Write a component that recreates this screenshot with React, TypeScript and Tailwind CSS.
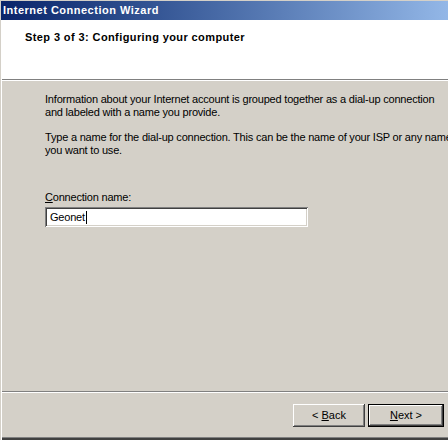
import type { ReactNode } from 'react'

const raised =
  'shadow-[inset_-1px_-1px_#404040,inset_1px_1px_#ffffff,inset_-2px_-2px_#808080,inset_2px_2px_#d4d0c8]'
const sunken =
  'shadow-[inset_1px_1px_#808080,inset_-1px_-1px_#ffffff,inset_2px_2px_#404040,inset_-2px_-2px_#d4d0c8]'

function WizButton({ children, isDefault }: { children: ReactNode; isDefault?: boolean }) {
  if (isDefault) {
    return (
      <div className="h-[23px] w-[76px] border border-black">
        <button className={`flex h-full w-full items-center justify-center bg-[#d4d0c8] text-[11px] text-black ${raised}`}>
          {children}
        </button>
      </div>
    )
  }
  return (
    <button className={`flex h-[23px] w-[72px] items-center justify-center bg-[#d4d0c8] text-[11px] text-black ${raised}`}>
      {children}
    </button>
  )
}

export default function App() {
  return (
    <div
      className="flex h-[440px] w-[448px] flex-col overflow-hidden bg-[#d4d0c8] pl-px pt-px text-black"
      style={{ fontFamily: '"Liberation Sans", Arial, sans-serif' }}
    >
      {/* caption */}
      <div className="flex h-[19px] shrink-0 items-center bg-gradient-to-r from-[#0a246a] to-[#93b7e7] pl-[2px]">
        <span className="text-[11px] font-bold leading-none tracking-[0.5px] text-white">Internet Connection Wizard</span>
      </div>

      <div className="flex flex-1 flex-col border-l border-white">
        {/* header */}
        <div className="h-[59px] shrink-0 bg-white pl-[23px] pt-[11px]">
          <p className="text-[11px] font-bold leading-[13px] tracking-[0.4px]">Step 3 of 3: Configuring your computer</p>
        </div>
        <div className="h-px shrink-0 bg-[#808080]" />
        <div className="h-px shrink-0 bg-white" />

        {/* body */}
        <div className="flex-1 pl-[43px] pt-[12px] text-[11px] leading-[13px] tracking-[-0.2px]">
          <p className="whitespace-nowrap">
            Information about your Internet account is grouped together as a dial-up connection
            <br />
            and labeled with a name you provide.
          </p>
          <p className="mt-[12px] whitespace-nowrap">
            Type a name for the dial-up connection. This can be the name of your ISP or any name
            <br />
            you want to use.
          </p>
          <p className="mt-[34px]">
            <span className="underline">C</span>onnection name:
          </p>
          <div className={`mt-[3px] flex h-[20px] w-[263px] items-center bg-white pl-[5px] ${sunken}`}>
            <span>Geonet</span>
            <span className="ml-px h-[13px] w-px bg-black" />
          </div>
        </div>

        {/* footer */}
        <div className="h-px shrink-0 bg-[#808080]" />
        <div className="h-px shrink-0 bg-white" />
        <div className="flex h-[44px] shrink-0 items-start justify-end gap-[3px] pr-[4px] pt-[11px]">
          <WizButton>
            &lt; <span className="ml-[3px] underline">B</span>ack
          </WizButton>
          <WizButton isDefault>
            <span className="underline">N</span>ext &gt;
          </WizButton>
        </div>
        <div className="h-px shrink-0 bg-[#808080]" />
        <div className="h-[2px] shrink-0 bg-[#404040]" />
      </div>
    </div>
  )
}
